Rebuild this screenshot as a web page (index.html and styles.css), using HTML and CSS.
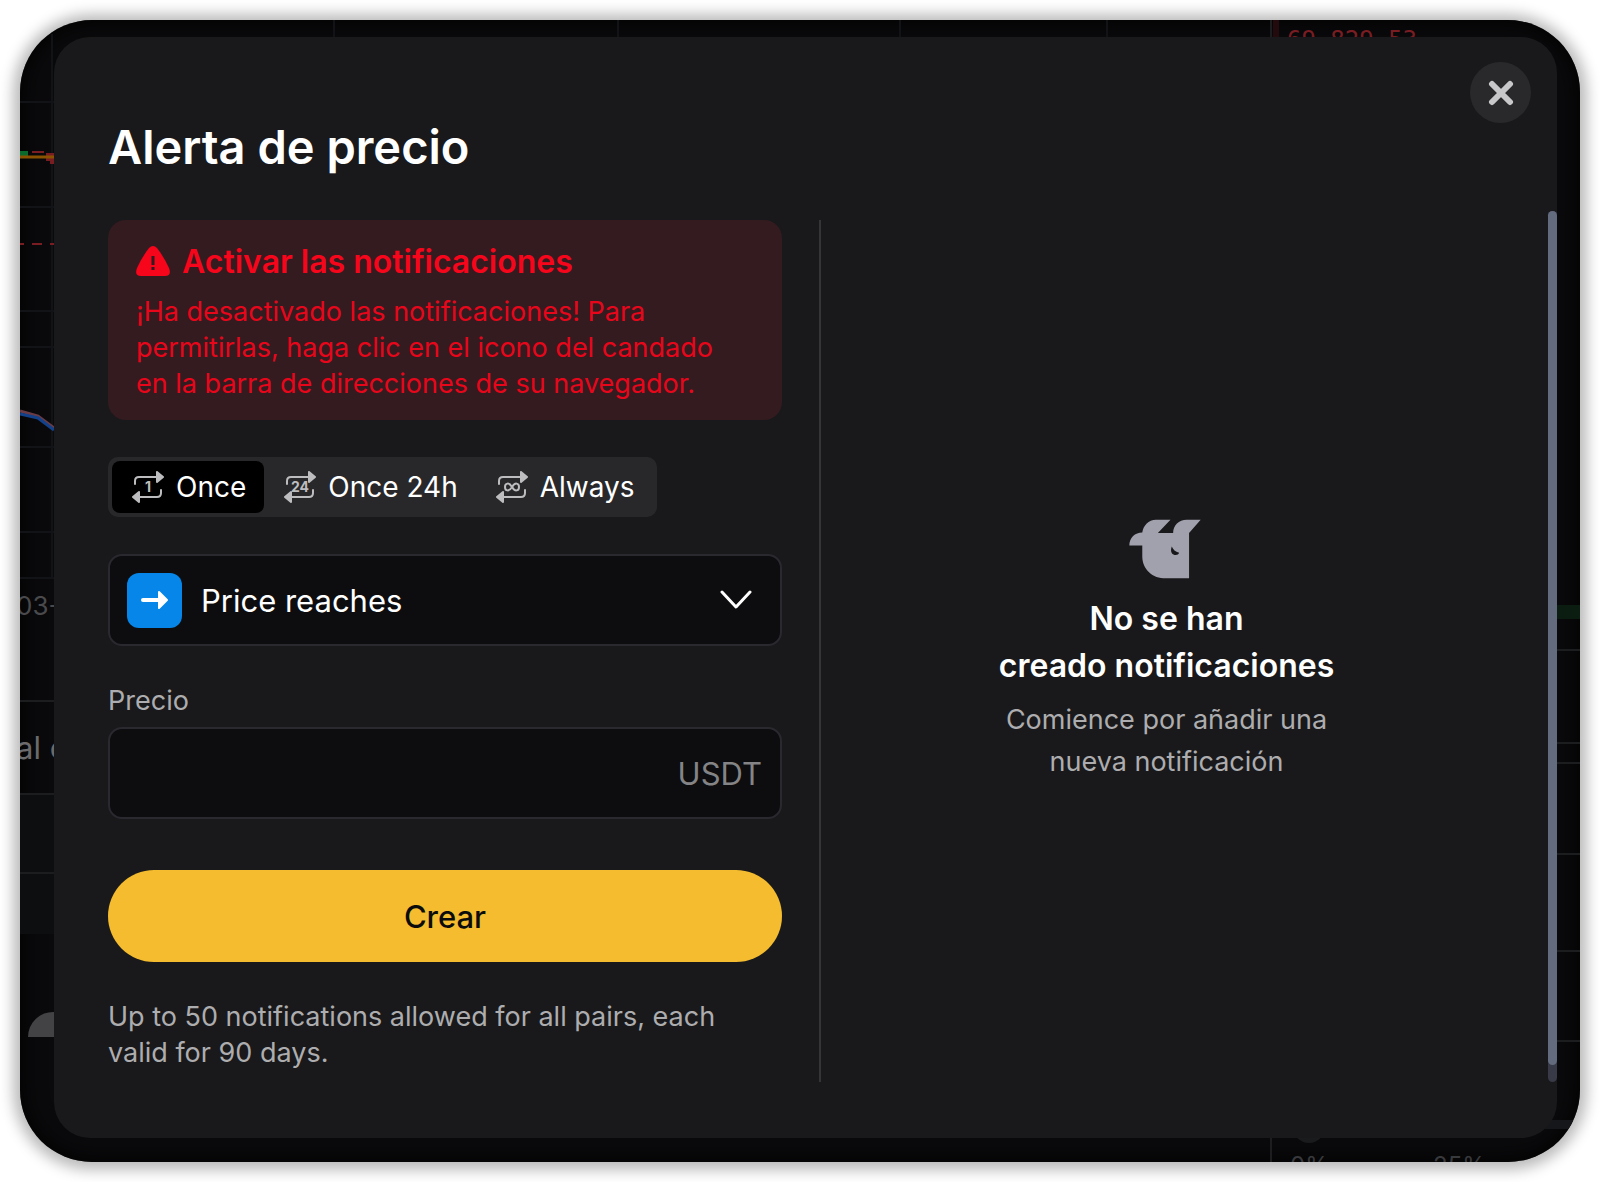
FILE: index.html
```html
<!DOCTYPE html>
<html lang="es">
<head>
    <meta charset="UTF-8">
    <meta name="viewport" content="width=device-width, initial-scale=1.0">
    <title>Alerta de precio</title>
    <link rel="stylesheet" href="styles.css">
</head>
<body>

    <div class="frame">
        <!-- Trading chart behind the dialog -->
        <svg class="backdrop" viewBox="0 0 1560 1142" preserveAspectRatio="xMidYMid slice" aria-hidden="true">
            <path d="M0 774H34V914H0Z" fill="#0d0e10"/>
            <g stroke="#121316" stroke-width="2">
                <path d="M0 82H34M0 187H34M0 291H34M0 327H34M0 427H34M0 512H34M0 558H34"/>
                <path d="M314 0V18M598 0V18M880 0V18M1087 0V18M32 14V558"/>
            </g>
            <g stroke="#1c1d1f" stroke-width="2">
                <path d="M0 681H34M0 774H34M0 853H34"/>
                <path d="M1500 630H1560M1500 723H1560M1500 743H1560M1500 834H1560M1500 931H1560M1500 1021H1560"/>
                <path d="M1251 0V18M1251 1112V1142"/>
            </g>
            <path d="M1253 0H1259V18H1253Z" fill="#220a0d"/>
            <path d="M1500 585H1560V599H1500Z" fill="#0b1d11"/>
            <path d="M1500 1100H1560V1109H1500Z" fill="#16171a"/>
            <path d="M0 131H8V136H0Z" fill="#0b6b2c"/>
            <path d="M26 133H34V144H30V141H26Z" fill="#7a1d22"/>
            <path d="M0 137H34" stroke="#8a5200" stroke-width="3"/>
            <path d="M12 132H24M0 224H4M12 224H22M30 224H34" stroke="#7a1d22" stroke-width="2"/>
            <path d="M0 391L18 396L34 408" fill="none" stroke="#6a3b45" stroke-width="3"/>
            <path d="M0 394L18 398L34 410" fill="none" stroke="#12418a" stroke-width="3"/>
            <path d="M8 1017A25 25 0 0 1 34 992V1017Z" fill="#434346"/>
            <circle cx="1289" cy="1107" r="16" fill="#1a1b1d"/>
            <g font-family="Inter, sans-serif">
                <text x="-4" y="595" font-size="26" fill="#4a4a4d">03-</text>
                <text x="-4" y="739" font-size="31" fill="#6b6b6d">al c</text>
                <text x="1505" y="697" font-size="31" fill="#6b6b6d">A</text>
                <text x="1267" y="28" font-size="24" fill="#7a1d22" font-family="DejaVu Sans Mono, monospace">69,829.53</text>
                <text x="1270" y="1154" font-size="24" fill="#38393c">0%</text>
                <text x="1413" y="1154" font-size="24" fill="#38393c">25%</text>
            </g>
        </svg>

        <div class="modal" role="dialog" aria-labelledby="modalTitle">
            <button type="button" class="close" aria-label="Cerrar">
                <svg viewBox="0 0 26 26" width="26" height="26"><path d="M4 4L22 22M22 4L4 22" stroke="#c8c8ca" stroke-width="6" stroke-linecap="round"/></svg>
            </button>

            <h1 id="modalTitle">Alerta de precio</h1>

            <div class="content">
                <form class="alert-form">
                    <div class="warning">
                        <h2>
                            <svg viewBox="0 0 34 32" width="34" height="32">
                                <path d="M13 2Q17-2 21 2Q28 11 33 22Q36 30 29 30H5Q-2 30 1 22Q6 11 13 2Z" fill="#f6051b"/>
                                <path d="M17 10V19M17 21V24" stroke="#331b20" stroke-width="3"/>
                            </svg>
                            Activar las notificaciones
                        </h2>
                        <p>¡Ha desactivado las notificaciones! Para permitirlas, haga clic en el icono del candado en la barra de direcciones de su navegador.</p>
                    </div>

                    <!-- How often the alert fires -->
                    <div class="tabs">
                        <input type="radio" name="frequency" id="once" checked>
                        <label for="once">
                            <svg class="repeat" viewBox="0 0 32 32" width="32" height="32">
                                <path class="line" d="M3 13V10Q3 6 7 6H24M29 19V22Q29 26 25 26H8"/>
                                <path class="head" d="M25 1V11L31 6ZM7 21V31L1 26Z"/>
                                <text x="16" y="21">1</text>
                            </svg>
                            Once
                        </label>
                        <input type="radio" name="frequency" id="once24">
                        <label for="once24">
                            <svg class="repeat" viewBox="0 0 32 32" width="32" height="32">
                                <path class="line" d="M3 13V10Q3 6 7 6H24M29 19V22Q29 26 25 26H8"/>
                                <path class="head" d="M25 1V11L31 6ZM7 21V31L1 26Z"/>
                                <text x="16" y="21">24</text>
                            </svg>
                            Once 24h
                        </label>
                        <input type="radio" name="frequency" id="always">
                        <label for="always">
                            <svg class="repeat" viewBox="0 0 32 32" width="32" height="32">
                                <path class="line" d="M3 13V10Q3 6 7 6H24M29 19V22Q29 26 25 26H8"/>
                                <path class="head" d="M25 1V11L31 6ZM7 21V31L1 26Z"/>
                                <path class="loop" d="M16 16C13 11 9 12 9 16S13 21 16 16S23 12 23 16S19 21 16 16Z"/>
                            </svg>
                            Always
                        </label>
                    </div>

                    <div class="select-box">
                        <span class="badge">
                            <svg viewBox="0 0 28 20" width="28" height="20"><path d="M2 10H19" stroke="#fff" stroke-width="4" stroke-linecap="round"/><path d="M18 2L26 10L18 18Z" fill="#fff" stroke="#fff" stroke-width="2" stroke-linejoin="round"/></svg>
                        </span>
                        <select aria-label="Condition">
                            <option>Price reaches</option>
                        </select>
                        <svg class="chevron" viewBox="0 0 32 20" width="32" height="20"><path d="M2 2L16 17L30 2" fill="none" stroke="#fff" stroke-width="3" stroke-linecap="round" stroke-linejoin="round"/></svg>
                    </div>

                    <div class="field">
                        <label for="price">Precio</label>
                        <div class="price-box">
                            <input type="text" id="price" inputmode="decimal">
                            <span>USDT</span>
                        </div>
                    </div>

                    <button type="button" class="create">Crear</button>
                    <p class="note">Up to 50 notifications allowed for all pairs, each valid for 90 days.</p>
                </form>

                <section class="empty">
                    <svg viewBox="444 54 229 179" width="76" height="60">
                        <path d="M660 55L625 95V232H555C515 232 484 205 484 165V133H445C445 110 462 94 484 94C487 72 503 55 525 55H569L531 95H577C577 72 594 55 618 55Z" fill="#a1a1ad"/>
                        <path d="M573 136C576 145 584 152 595 155C593 162 584 163 578 160C570 156 569 146 573 136Z" fill="#18181a"/>
                    </svg>
                    <h2>No se han<br>creado notificaciones</h2>
                    <p>Comience por añadir una<br>nueva notificación</p>
                </section>
            </div>

            <div class="scrollbar"><div class="thumb"></div></div>
        </div>
    </div>

</body>
</html>
```
FILE: styles.css
```css
* {
    margin: 0;
    padding: 0;
    box-sizing: border-box;
}

body {
    min-height: 100vh;
    padding: 20px;
    display: flex;
    background: #fff;
    color: #fff;
    font-family: Inter, sans-serif;
}

button,
input,
select {
    font-family: inherit;
    color: inherit;
    border: none;
    outline: none;
}

/* Rounded window with the chart behind */
.frame {
    position: relative;
    flex: 1;
    display: flex;
    padding: 17px 23px 24px 34px;
    border-radius: 72px;
    overflow: hidden;
    background: #0a0a0c;
    box-shadow: 0 1px 14px 7px rgba(0, 0, 0, 0.27), inset 0 0 24px #000;
}

.backdrop {
    position: absolute;
    inset: 0;
    width: 100%;
    height: 100%;
}

/* Dialog */
.modal {
    position: relative;
    flex: 1;
    display: flex;
    flex-direction: column;
    padding: 80px 45px 56px 54px;
    border-radius: 36px;
    background: #19191b;
}

.close {
    position: absolute;
    top: 25px;
    right: 26px;
    width: 61px;
    height: 61px;
    display: flex;
    align-items: center;
    justify-content: center;
    border-radius: 50%;
    background: #29292b;
    cursor: pointer;
}

h1 {
    font-size: 47px;
    line-height: 60px;
    font-weight: 600;
    margin-bottom: 43px;
}

.content {
    flex: 1;
    display: grid;
    grid-template-columns: 674fr 693fr;
    gap: 37px;
}

.alert-form {
    display: flex;
    flex-direction: column;
    gap: 37px;
}

/* Warning box */
.warning {
    padding: 20px 48px 18px 28px;
    border-radius: 18px;
    background: #331b20;
    color: #f6051b;
}

.warning h2 {
    display: flex;
    align-items: center;
    gap: 12px;
    margin-bottom: 10px;
    font-size: 32px;
    line-height: 44px;
    font-weight: 600;
}

.warning p {
    font-size: 27px;
    line-height: 36px;
    color: #e8061b;
}

/* Frequency tabs */
.tabs {
    align-self: flex-start;
    display: flex;
    padding: 4px;
    border-radius: 10px;
    background: #28282a;
}

.tabs input {
    position: absolute;
    opacity: 0;
}

.tabs label {
    display: flex;
    align-items: center;
    gap: 12px;
    padding: 0 18px 0 20px;
    height: 52px;
    border-radius: 8px;
    font-size: 28px;
    cursor: pointer;
}

.tabs input:checked + label {
    background: #000;
}

.repeat .line {
    fill: none;
    stroke: #bdbdbf;
    stroke-width: 2;
    stroke-linecap: round;
}

.repeat .head {
    fill: #bdbdbf;
    stroke: #bdbdbf;
    stroke-width: 2;
    stroke-linejoin: round;
}

.repeat .loop {
    fill: none;
    stroke: #bdbdbf;
    stroke-width: 2;
}

.repeat text {
    fill: #bdbdbf;
    font-size: 14px;
    font-weight: 700;
    text-anchor: middle;
}

/* Condition and price */
.select-box,
.price-box {
    position: relative;
    display: flex;
    align-items: center;
    height: 92px;
    border: 2px solid #29292f;
    border-radius: 14px;
    background: #0d0d0f;
    font-size: 31px;
}

.badge {
    position: absolute;
    left: 17px;
    width: 55px;
    height: 55px;
    display: flex;
    align-items: center;
    justify-content: center;
    border-radius: 12px;
    background: #0586e8;
    pointer-events: none;
}

.select-box select {
    appearance: none;
    width: 100%;
    height: 100%;
    padding: 0 60px 0 91px;
    border-radius: 12px;
    background: transparent;
    font-size: 31px;
}

.chevron {
    position: absolute;
    right: 28px;
    pointer-events: none;
}

.field label {
    display: block;
    margin-bottom: 8px;
    font-size: 27px;
    line-height: 36px;
    color: #adadaf;
}

.price-box {
    padding-right: 18px;
}

.price-box input {
    flex: 1;
    min-width: 0;
    height: 100%;
    padding-left: 20px;
    background: transparent;
    font-size: 31px;
}

.price-box span {
    color: #848486;
}

.create {
    height: 92px;
    margin-top: 14px;
    border-radius: 46px;
    background: #f4bc2e;
    color: #0c0c0c;
    font-size: 31px;
    font-weight: 500;
    cursor: pointer;
}

.note {
    font-size: 27px;
    line-height: 36px;
    color: #adadaf;
}

/* Empty list */
.empty {
    display: flex;
    flex-direction: column;
    align-items: center;
    justify-content: center;
    border-left: 2px solid #353538;
    text-align: center;
}

.empty h2 {
    margin: 16px 0 10px;
    font-size: 32px;
    line-height: 47px;
    font-weight: 600;
}

.empty p {
    font-size: 27px;
    line-height: 42px;
    color: #adadaf;
}

.scrollbar {
    position: absolute;
    top: 174px;
    right: 0;
    bottom: 56px;
    width: 9px;
    border-radius: 5px;
    background: #393a47;
}

.thumb {
    height: 98%;
    border-radius: 5px;
    background: #636b7f;
}
```
